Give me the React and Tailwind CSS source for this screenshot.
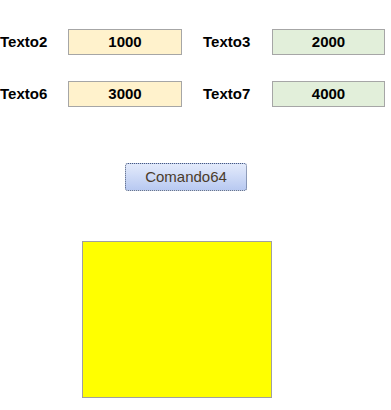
const Field = ({ label, value, bg, labelW, boxW, className = "" }) => (
  <div className={`flex items-center ${className}`}>
    <span className={`${labelW} text-[15px] font-bold text-black`}>{label}</span>
    <div
      className={`${boxW} h-[26px] flex items-center justify-center border border-[#a6a6a6] text-[15px] font-bold text-black ${bg}`}
    >
      {value}
    </div>
  </div>
);

const App = () => {
  return (
    <div
      className="w-[391px] h-[410px] bg-white"
      style={{ fontFamily: '"Liberation Sans", Arial, sans-serif' }}
    >
      {/* Row 1 */}
      <div className="flex pt-[29px]">
        <Field label="Texto2" value="1000" bg="bg-[#fff2cc]" labelW="w-[68px]" boxW="w-[114px]" />
        <Field label="Texto3" value="2000" bg="bg-[#e2efda]" labelW="w-[69px]" boxW="w-[113px]" className="ml-[21px]" />
      </div>

      {/* Row 2 */}
      <div className="flex mt-[26px]">
        <Field label="Texto6" value="3000" bg="bg-[#fff2cc]" labelW="w-[68px]" boxW="w-[114px]" />
        <Field label="Texto7" value="4000" bg="bg-[#e2efda]" labelW="w-[69px]" boxW="w-[113px]" className="ml-[21px]" />
      </div>

      {/* Button */}
      <button className="ml-[125px] mt-[56px] w-[122px] h-[28px] flex items-center justify-center rounded-[3px] border border-dotted border-[#4a5a7a] bg-gradient-to-b from-[#e4ebfb] to-[#b8c9f1] text-[15px] text-[#4a3b2a]">
        Comando64
      </button>

      {/* Yellow box */}
      <div className="ml-[82px] mt-[50px] w-[190px] h-[157px] bg-[#ffff00] border border-[#a0a0a0]" />
    </div>
  );
};

export default App;
